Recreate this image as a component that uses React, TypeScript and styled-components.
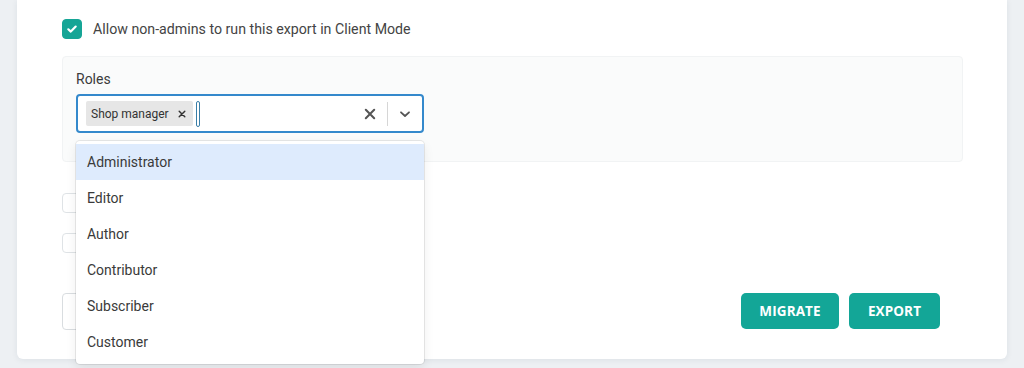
import React from "react";
import styled, { createGlobalStyle } from "styled-components";

const Global = createGlobalStyle`
  html, body { margin: 0; padding: 0; }
  body { background: #edf0f3; font-family: Roboto, "Liberation Sans", Arial, sans-serif; }
  * { box-sizing: border-box; }
`;

const Page = styled.div`
  width: 1024px;
  height: 368px;
  padding: 0 17px;
  overflow: hidden;
`;

const Card = styled.div`
  position: relative;
  background: #fff;
  height: 359px;
  border-radius: 0 0 6px 6px;
  box-shadow: 0 1px 6px rgba(30, 50, 80, 0.08);
  padding: 19px 44px 0 45px;
  display: flex;
  flex-direction: column;
`;

const CheckRow = styled.label<{ $mt?: number }>`
  display: flex;
  align-items: center;
  gap: 11px;
  margin-top: ${(p) => p.$mt ?? 0}px;
  font-size: 14.2px;
  color: #444;
  height: 20px;
`;

const Box = styled.span<{ $checked?: boolean }>`
  width: 20px;
  height: 20px;
  border-radius: 4px;
  flex: none;
  display: flex;
  align-items: center;
  justify-content: center;
  background: ${(p) => (p.$checked ? "#16a596" : "#fff")};
  border: 1px solid ${(p) => (p.$checked ? "#16a596" : "#dfe3e6")};
`;

const Panel = styled.div`
  margin-top: 17px;
  width: 901px;
  height: 106px;
  background: #fafbfb;
  border: 1px solid #f1f3f4;
  border-radius: 4px;
  padding: 14px 13px;
`;

const FieldLabel = styled.div`
  font-size: 14px;
  color: #3c3c3c;
  line-height: 16px;
  margin-bottom: 7px;
`;

const SelectWrap = styled.div`
  position: relative;
  width: 348px;
`;

const Control = styled.div`
  height: 39px;
  border: 2px solid #3489cc;
  border-radius: 4px;
  background: #fff;
  display: flex;
  align-items: center;
  padding: 0 0 0 8px;
`;

const ValueArea = styled.div`
  flex: 1;
  display: flex;
  align-items: center;
  gap: 3px;
`;

const Chip = styled.span`
  display: inline-flex;
  align-items: center;
  height: 25px;
  background: #e6e6e6;
  border-radius: 2px;
  font-size: 12px;
  color: #333;
  padding: 0 0 0 5px;
`;

const ChipRemove = styled.span`
  display: inline-flex;
  align-items: center;
  justify-content: center;
  width: 21px;
  height: 25px;
  margin-left: 3px;
  color: #333;
`;

const Caret = styled.span`
  width: 4px;
  height: 26px;
  border: 1.5px solid #3a7fa8;
  border-radius: 3px;
`;

const Indicator = styled.span`
  width: 34px;
  height: 100%;
  display: flex;
  align-items: center;
  justify-content: center;
  color: #555;
`;

const Sep = styled.span`
  width: 1px;
  height: 24px;
  background: #d6d6d6;
`;

const Menu = styled.div`
  position: absolute;
  left: 0;
  top: 47px;
  width: 348px;
  background: #fff;
  border-radius: 4px;
  padding: 3px 0 4px;
  box-shadow: 0 0 0 1px rgba(0, 0, 0, 0.08), 0 4px 11px rgba(0, 0, 0, 0.08);
  z-index: 10;
`;

const Option = styled.div<{ $active?: boolean }>`
  height: 36px;
  display: flex;
  align-items: center;
  padding-left: 11px;
  padding-bottom: 1px;
  font-size: 14px;
  color: #3a3a3a;
  background: ${(p) => (p.$active ? "#deebfd" : "#fff")};
`;

const BottomRow = styled.div`
  margin-top: 40px;
  display: flex;
  align-items: flex-start;
  justify-content: space-between;
  padding-right: 23px;
`;

const FakeInput = styled.div`
  width: 220px;
  height: 37px;
  border: 1px solid #d9dde0;
  border-radius: 4px;
`;

const Buttons = styled.div`
  display: flex;
  gap: 10px;
`;

const Btn = styled.button<{ $w: number }>`
  width: ${(p) => p.$w}px;
  height: 36px;
  background: #13a697;
  color: #fff;
  border: none;
  border-radius: 5px;
  font-family: "Open Sans", "Liberation Sans", sans-serif;
  font-weight: 700;
  font-size: 13.5px;
  letter-spacing: 0.1px;
`;

const Check = () => (
  <svg width="12" height="12" viewBox="0 0 12 12">
    <path d="M2.3 6.3 L4.8 8.6 L9.7 3.6" fill="none" stroke="#fff" strokeWidth="2.2" strokeLinecap="round" strokeLinejoin="round" />
  </svg>
);

const Cross = ({ s, w }: { s: number; w: number }) => (
  <svg width={s} height={s} viewBox="0 0 10 10">
    <path d="M1.5 1.5 L8.5 8.5 M8.5 1.5 L1.5 8.5" stroke="currentColor" strokeWidth={w} strokeLinecap="round" />
  </svg>
);

const Chevron = () => (
  <svg width="12" height="12" viewBox="0 0 12 12">
    <path d="M2 4.3 L6 8 L10 4.3" fill="none" stroke="currentColor" strokeWidth="1.8" strokeLinecap="round" strokeLinejoin="round" />
  </svg>
);

const roles = ["Administrator", "Editor", "Author", "Contributor", "Subscriber", "Customer"];

export default function App() {
  return (
    <>
      <Global />
      <Page>
        <Card>
          <CheckRow>
            <Box $checked>
              <Check />
            </Box>
            Allow non-admins to run this export in Client Mode
          </CheckRow>
          <Panel>
            <FieldLabel>Roles</FieldLabel>
            <SelectWrap>
              <Control>
                <ValueArea>
                  <Chip>
                    Shop manager
                    <ChipRemove>
                      <Cross s={8} w={1.8} />
                    </ChipRemove>
                  </Chip>
                  <Caret />
                </ValueArea>
                <Indicator>
                  <Cross s={12} w={1.7} />
                </Indicator>
                <Sep />
                <Indicator>
                  <Chevron />
                </Indicator>
              </Control>
              <Menu>
                {roles.map((r, i) => (
                  <Option key={r} $active={i === 0}>
                    {r}
                  </Option>
                ))}
              </Menu>
            </SelectWrap>
          </Panel>
          <CheckRow $mt={31}>
            <Box />
          </CheckRow>
          <CheckRow $mt={20}>
            <Box />
          </CheckRow>
          <BottomRow>
            <FakeInput />
            <Buttons>
              <Btn $w={98}>MIGRATE</Btn>
              <Btn $w={91}>EXPORT</Btn>
            </Buttons>
          </BottomRow>
        </Card>
      </Page>
    </>
  );
}
